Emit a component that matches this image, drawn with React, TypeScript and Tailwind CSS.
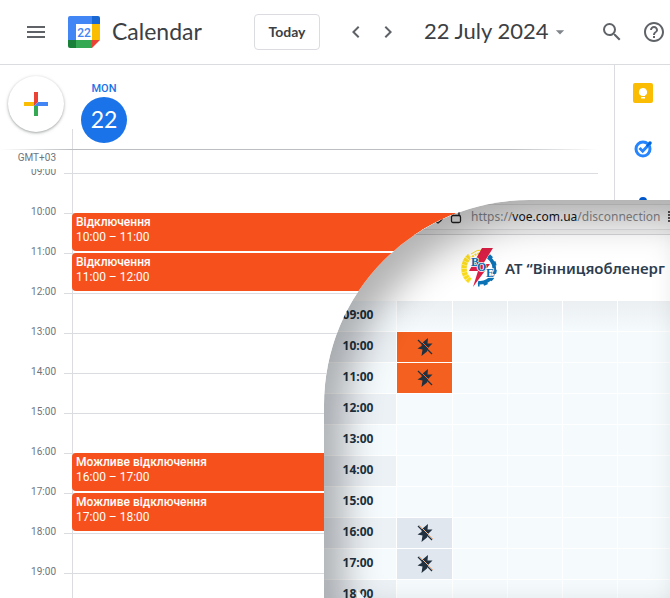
import type { ReactNode } from "react";

type CalendarEvent = { title: string; time: string };

const hours = ["09:00", "10:00", "11:00", "12:00", "13:00", "14:00", "15:00", "16:00", "17:00", "18:00", "19:00"];

const events: Record<string, CalendarEvent> = {
  "10:00": { title: "Відключення", time: "10:00 – 11:00" },
  "11:00": { title: "Відключення", time: "11:00 – 12:00" },
  "16:00": { title: "Можливе відключення", time: "16:00 – 17:00" },
  "17:00": { title: "Можливе відключення", time: "17:00 – 18:00" },
};

const outageRows: { hour: string; state?: "off" | "maybe" }[] = [
  { hour: "09:00" },
  { hour: "10:00", state: "off" },
  { hour: "11:00", state: "off" },
  { hour: "12:00" },
  { hour: "13:00" },
  { hour: "14:00" },
  { hour: "15:00" },
  { hour: "16:00", state: "maybe" },
  { hour: "17:00", state: "maybe" },
  { hour: "18:00" },
];

function IconButton({ label, path, className = "" }: { label: string; path: string; className?: string }) {
  return (
    <button type="button" aria-label={label} className={`flex h-8 w-8 shrink-0 items-center justify-center text-[#5f6368] ${className}`}>
      <svg viewBox="0 0 24 24" className="h-6 w-6" fill="currentColor">
        <path d={path} />
      </svg>
    </button>
  );
}

function CalendarLogo() {
  return (
    <svg viewBox="0 0 32 32" className="ml-4 h-8 w-8 shrink-0" aria-hidden="true">
      <path d="M2 0H24V8H8V24H0V2A2 2 0 0 1 2 0Z" fill="#4285f4" />
      <path d="M24 0H30A2 2 0 0 1 32 2V8H24Z" fill="#1967d2" />
      <path d="M24 8H32V24H24Z" fill="#fbbc04" />
      <path d="M8 24H24V32H8Z" fill="#34a853" />
      <path d="M0 24H8V32H2A2 2 0 0 1 0 30Z" fill="#188038" />
      <path d="M24 24H32L24 32Z" fill="#ea4335" />
      <path d="M8 8H24V24H8Z" fill="#fff" />
      <text x="16" y="20.5" textAnchor="middle" fontSize="12" fontFamily="Roboto, sans-serif" fontWeight="500" fill="#4285f4">
        22
      </text>
    </svg>
  );
}

function TopBar() {
  return (
    <header className="flex h-[65px] items-center border-b border-[#dadce0] pl-5 text-[#3c4043]">
      <IconButton label="Main menu" path="M3 18h18v-2H3v2zm0-5h18v-2H3v2zm0-7v2h18V6H3z" />
      <CalendarLogo />
      <h1 className="w-[142px] shrink-0 pb-0.5 pl-3 font-[Lato,sans-serif] text-[23px] leading-8">Calendar</h1>
      <button type="button" className="ml-3 h-9 w-[66px] shrink-0 rounded border border-[#dadce0] font-[Lato,sans-serif] text-sm font-bold">
        Today
      </button>
      <IconButton label="Previous day" className="ml-5" path="M15.41 7.41L14 6l-6 6 6 6 1.41-1.41L10.83 12z" />
      <IconButton label="Next day" path="M10 6L8.59 7.41 13.17 12l-4.58 4.59L10 18l6-6z" />
      <button type="button" className="ml-5 flex shrink-0 items-center gap-0.5 whitespace-nowrap font-[Lato,sans-serif] text-[22px] leading-8">
        <span className="pb-0.5">22 July 2024</span>
        <svg viewBox="0 0 24 24" className="h-5 w-5 text-[#80868b]" fill="currentColor" aria-hidden="true">
          <path d="M7 10l5 5 5-5z" />
        </svg>
      </button>
      <div className="ml-auto flex shrink-0 gap-2.5">
        <IconButton
          label="Search"
          path="M15.5 14h-.79l-.28-.27A6.471 6.471 0 0 0 16 9.5 6.5 6.5 0 1 0 9.5 16c1.61 0 3.09-.59 4.23-1.57l.27.28v.79l5 4.99L20.49 19l-4.99-5zm-6 0C7.01 14 5 11.99 5 9.5S7.01 5 9.5 5 14 7.01 14 9.5 11.99 14 9.5 14z"
        />
        <IconButton
          label="Help"
          path="M11 18h2v-2h-2v2zm1-16C6.48 2 2 6.48 2 12s4.48 10 10 10 10-4.48 10-10S17.52 2 12 2zm0 18c-4.41 0-8-3.59-8-8s3.59-8 8-8 8 3.59 8 8-3.59 8-8 8zm0-14c-2.21 0-4 1.79-4 4h2c0-1.1.9-2 2-2s2 .9 2 2c0 2-3 1.75-3 5h2c0-2.25 3-2.5 3-5 0-2.21-1.79-4-4-4z"
        />
      </div>
    </header>
  );
}

function DayHeader() {
  return (
    <div className="flex h-[84px]">
      <div className="w-[72px] pl-2 pt-[11px]">
        <button
          type="button"
          aria-label="Create"
          className="flex h-14 w-14 items-center justify-center rounded-full bg-white shadow-[0_1px_2px_0_rgba(60,64,67,0.3),0_1px_3px_1px_rgba(60,64,67,0.15)]"
        >
          <svg viewBox="0 0 24 24" className="h-6 w-6">
            <path d="M10 0h4v10l-4 4z" fill="#ea4335" />
            <path d="M0 10h10v4H0z" fill="#fbbc04" />
            <path d="M10 14l4-2v12h-4z" fill="#34a853" />
            <path d="M14 10h10v4H10z" fill="#4285f4" />
          </svg>
        </button>
      </div>
      <div className="h-5 w-px self-end bg-[#dadce0]" />
      <div className="flex flex-col items-center pl-2 pt-4">
        <span className="text-[11px] font-medium leading-4 text-[#1a73e8]">MON</span>
        <span className="flex h-[46px] w-[46px] items-center justify-center rounded-full bg-[#1a73e8] pb-0.5 font-[Lato,sans-serif] text-[23px] text-white">
          22
        </span>
      </div>
    </div>
  );
}

function HourRow({ hour }: { hour: string }) {
  const event = events[hour];
  return (
    <div className="flex h-10">
      <time className="-mt-[9px] w-14 shrink-0 text-right text-[10px] leading-4 text-[#70757a]">{hour}</time>
      <div className="ml-2 w-2 shrink-0 border-t border-[#dadce0]" />
      <div className="flex-1 border-l border-t border-[#dadce0]">
        {event && (
          <article className="-ml-px -mt-px h-[38px] rounded bg-[#f6511d] pl-1 pt-0.5 text-xs leading-[15px] text-white">
            <h2 className="font-medium">{event.title}</h2>
            <p>{event.time}</p>
          </article>
        )}
      </div>
    </div>
  );
}

function SidePanel() {
  return (
    <aside className="flex w-14 shrink-0 flex-col items-center gap-9 border-l border-[#dadce0] pt-[18px]">
      <button type="button" aria-label="Keep">
        <svg viewBox="0 0 20 20" className="block h-5 w-5">
          <rect width="20" height="20" rx="2" fill="#fbbc04" />
          <path d="M10 5a4 4 0 0 0-2 7.5V13h4v-.5A4 4 0 0 0 10 5zM8 14h4v1.500H8z" fill="#fff" />
        </svg>
      </button>
      <button type="button" aria-label="Tasks">
        <svg viewBox="0 0 20 20" className="block h-5 w-5" fill="none">
          <circle cx="10" cy="10" r="7" stroke="#2684fc" strokeWidth="3" />
          <path d="M6.500 9l3.200 3.200L17 4.500" stroke="#2684fc" strokeWidth="3" />
          <circle cx="17" cy="4" r="1.800" fill="#0066da" />
          <path d="M13 6.500l3-3 1.500 1.500-3 3z" fill="#0066da" />
        </svg>
      </button>
      <button type="button" aria-label="Contacts">
        <svg viewBox="0 0 20 20" className="block h-5 w-5" fill="#0057cc">
          <circle cx="10" cy="6" r="4" />
          <path d="M2 18c0-4 4-6 8-6s8 2 8 6z" />
        </svg>
      </button>
    </aside>
  );
}

function PowerOffIcon({ gap }: { gap: string }) {
  return (
    <svg viewBox="0 0 16 20" className="mx-auto block h-5 w-4 text-[#22313f]" aria-label="Немає світла" role="img">
      <path d="M11 1L5 6L4.500 9L0.500 11.500L5.500 12.500L4.500 19L10 14.500L11 11L15.500 6.500L10.500 6.500Z" fill="currentColor" />
      <path d="M2 2L16 16" stroke={gap} strokeWidth="1" />
      <path d="M1 3L15 17" stroke="currentColor" strokeWidth="1.200" />
    </svg>
  );
}

function CompanyLogo() {
  const letter = (x: number, y: number, text: string): ReactNode => (
    <text x={x} y={y} fontSize="12" fontWeight="700" fontFamily="Liberation Serif, serif" fill="#0b6aad" stroke="#fff" strokeWidth="1.500" paintOrder="stroke">
      {text}
    </text>
  );
  return (
    <svg viewBox="0 0 38 40" className="h-10 w-[38px] shrink-0" aria-hidden="true" fill="none">
      <path d="M9 8A16 16 0 0 0 9 33" stroke="#fbdc1c" strokeWidth="5.500" />
      <path d="M9 8A16 16 0 0 0 9 33" stroke="#fff3a0" strokeWidth="6" strokeDasharray="0.700 2.800" />
      <path d="M10 6Q16 1 23 2" stroke="#fbdc1c" strokeWidth="1" />
      <path d="M11 9Q17 4 22 6" stroke="#fbdc1c" strokeWidth="2" strokeDasharray="2 1" />
      <path d="M27 9A14 14 0 0 1 17 34.500" stroke="#0b72b5" strokeWidth="3.500" />
      <path d="M28 7.500A16.500 16.500 0 0 1 17 37" stroke="#0b72b5" strokeWidth="3" strokeDasharray="4 4" />
      <path d="M21 0H32L22 16H29L12 39L17 23H8Z" fill="#dc1f45" />
      {letter(10, 18, "В")}
      {letter(16, 23, "О")}
      {letter(25, 29, "Е")}
    </svg>
  );
}

function OutageWindow() {
  return (
    <section className="absolute bottom-0 left-[324px] right-0 top-[200px] overflow-hidden rounded-tl-[205px] bg-white">
      <div className="flex h-[35px] flex-col justify-center border-b border-[#d6d6d8] bg-[#f4f4f5]">
        <div className="flex h-[26px] items-center whitespace-nowrap border-y border-[#e2e2e4] bg-[#f9f9fa] pl-[108px] font-['Noto_Sans',sans-serif] text-xs text-[#8c8c90]">
          <svg viewBox="0 0 12 14" className="h-3.5 w-3 shrink-0" fill="none" stroke="#333" strokeWidth="1.500" aria-hidden="true">
            <path d="M1 2l5-1 5 1v4c0 3-2 5-5 7-3-2-5-4-5-7z" />
          </svg>
          <svg viewBox="0 0 12 14" className="ml-1.5 h-3.5 w-3 shrink-0" fill="none" stroke="#222" strokeWidth="1.300" aria-hidden="true">
            <rect x="1.500" y="5.500" width="9" height="7" rx="1.500" />
            <path d="M3 5V3.500a3 3 0 0 1 6 0V5" />
          </svg>
          <p className="ml-[9px] w-[191px] shrink-0">
            https://<span className="text-[#15141a]">voe.com.ua</span>/disconnection
          </p>
          <svg viewBox="0 0 12 12" className="ml-1.5 h-3 w-3 shrink-0" stroke="#222" strokeWidth="1.500" aria-hidden="true">
            <path d="M0 1h12M0 4h12M0 7h12M0 10h12" />
          </svg>
        </div>
      </div>
      <div className="flex h-[66px] items-center gap-1.5 pl-[137px]">
        <CompanyLogo />
        <p className="whitespace-nowrap font-['Noto_Sans',sans-serif] text-[15px] font-semibold text-[#2c3e50]">АТ “Вінницяобленерг</p>
      </div>
      <table className="w-[404px] table-fixed border-separate border-spacing-0">
        <colgroup>
          <col className="w-[73px]" />
          <col className="w-[56px]" />
          <col span={5} className="w-[55px]" />
        </colgroup>
        <tbody>
          {outageRows.map(({ hour, state }, index) => (
            <tr key={hour} className="h-[31px]">
              <th
                scope="row"
                className={`border-b border-r border-white p-0 pb-0.5 pr-1 text-center font-['Open_Sans',sans-serif] text-xs font-bold text-[#22313f] ${index % 2 ? "bg-[#ecf1f6]" : "bg-[#f5fafd]"}`}
              >
                {hour}
              </th>
              <td
                className={`border-b border-r border-white p-0 ${state === "off" ? "bg-[#f3601f]" : state === "maybe" ? "bg-[#e0e7ef]" : index === 0 ? "bg-linear-to-b from-[#ebeff2] to-[#f5fafd]" : "bg-[#f5fafd]"}`}
              >
                {state && <PowerOffIcon gap={state === "off" ? "#f3601f" : "#f0b48c"} />}
              </td>
              {[1, 2, 3, 4, 5].map((day) => (
                <td
                  key={day}
                  className={`border-b border-r border-white p-0 ${index === 0 ? "bg-linear-to-b from-[#ebeff2] to-[#f5fafd]" : "bg-[#f5fafd]"}`}
                />
              ))}
            </tr>
          ))}
        </tbody>
      </table>
      <div className="pointer-events-none absolute inset-0 rounded-tl-[205px] shadow-[inset_20px_20px_36px_rgba(0,0,0,0.3)]" />
      {/* mouse pointer resting over the 18:00 row */}
      <svg viewBox="0 0 12 18" className="pointer-events-none absolute left-8 top-[389px] h-[18px] w-3" aria-hidden="true">
        <path d="M1 0V15L4 12L6 17L8 16L6 11H10Z" fill="#f1f4f6" />
      </svg>
    </section>
  );
}

export default function App() {
  return (
    <div className="relative flex h-screen flex-col overflow-hidden bg-white font-[Roboto,sans-serif]">
      <TopBar />
      <div className="flex min-h-0 flex-1">
        <main className="flex min-w-0 flex-1 flex-col pr-4">
          <DayHeader />
          <div className="h-px shrink-0 bg-[linear-gradient(to_right,transparent,#bcbec1_12%,#bcbec1_85%,transparent)]" />
          <div className="flex h-[19px] shrink-0">
            <span className="w-[72px] shrink-0 pr-4 text-right text-[10px] leading-4 text-[#70757a]">GMT+03</span>
            <div className="flex-1 border-l border-[#dadce0]" />
          </div>
          <div className="min-h-0 flex-1 overflow-hidden">
            <div className="flex h-1 pl-[72px]">
              <div className="flex-1 border-l border-[#dadce0]" />
            </div>
            {hours.map((hour) => (
              <HourRow key={hour} hour={hour} />
            ))}
          </div>
        </main>
        <SidePanel />
      </div>
      <OutageWindow />
    </div>
  );
}
